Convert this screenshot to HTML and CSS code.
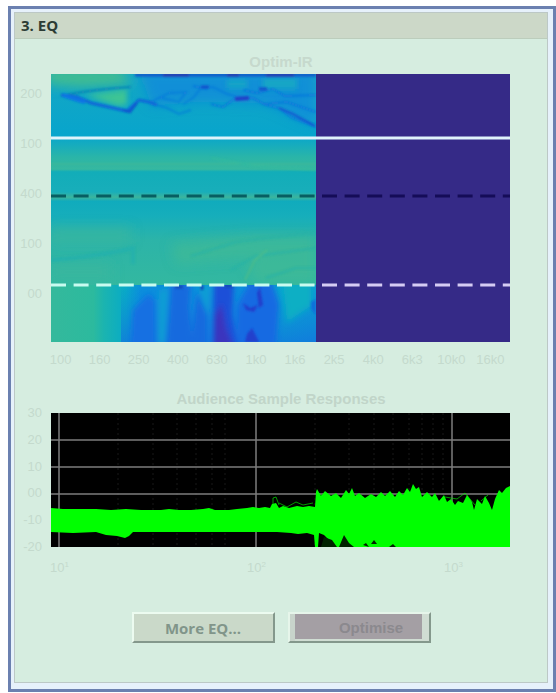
FILE: index.html
```html
<!DOCTYPE html>
<html lang="en">
<head>
    <meta charset="UTF-8">
    <meta name="viewport" content="width=device-width, initial-scale=1.0">
    <title>EQ</title>
    <link rel="stylesheet" href="styles.css">
</head>
<body>
    <div class="frame">
        <section class="panel">
            <h1 class="panel-header">3. EQ</h1>

            <h2 class="plot-title optim-title">Optim-IR</h2>
            <div class="plot">
                <div class="y-axis y-axis-map">
                    <span>200</span><span>100</span><span>400</span><span>100</span><span>00</span>
                </div>
                <svg class="chart" viewBox="0 0 459 268">
                    <defs>
                        <linearGradient id="base" x1="0" y1="0" x2="0" y2="1">
                            <stop offset="0" stop-color="#14a6c4"/>
                            <stop offset="0.23" stop-color="#08a5cc"/>
                            <stop offset="0.26" stop-color="#14abc0"/>
                            <stop offset="0.31" stop-color="#2ab5a8"/>
                            <stop offset="0.355" stop-color="#36b8a0"/>
                            <stop offset="0.365" stop-color="#12adb9"/>
                            <stop offset="0.44" stop-color="#18aeba"/>
                            <stop offset="0.46" stop-color="#3cb49c"/>
                            <stop offset="0.475" stop-color="#10abbd"/>
                            <stop offset="0.53" stop-color="#16aebb"/>
                            <stop offset="0.62" stop-color="#2cb4a8"/>
                            <stop offset="0.79" stop-color="#33b8a0"/>
                        </linearGradient>
                        <linearGradient id="low" x1="0" y1="0" x2="1" y2="0">
                            <stop offset="0" stop-color="#34b99c"/>
                            <stop offset="0.16" stop-color="#2cba9e"/>
                            <stop offset="0.2" stop-color="#1bb4b0"/>
                            <stop offset="0.28" stop-color="#08abc6"/>
                            <stop offset="0.34" stop-color="#0b8fdc"/>
                            <stop offset="0.8" stop-color="#0b8ddc"/>
                            <stop offset="0.88" stop-color="#08a8cc"/>
                            <stop offset="1" stop-color="#0c9cd2"/>
                        </linearGradient>
                        <linearGradient id="deep" x1="0" y1="0" x2="0" y2="1">
                            <stop offset="0" stop-color="#0d78e0" stop-opacity="0"/>
                            <stop offset="1" stop-color="#1468e4" stop-opacity="0.6"/>
                        </linearGradient>
                        <filter id="soft" x="-10%" y="-50%" width="120%" height="200%"><feGaussianBlur stdDeviation="1.2"/></filter>
                        <filter id="streak"><feGaussianBlur stdDeviation="2.4 3"/></filter>
                        <filter id="wide" x="-20%" y="-50%" width="140%" height="200%"><feGaussianBlur stdDeviation="6"/></filter>
                        <clipPath id="left"><rect width="265" height="268"/></clipPath>
                        <clipPath id="bottom"><rect y="211" width="265" height="57"/></clipPath>
                    </defs>
                    <rect width="459" height="268" fill="#352a87"/>
                    <g clip-path="url(#left)">
                        <rect width="265" height="268" fill="url(#base)"/>
                        <!-- top band -->
                        <g filter="url(#wide)">
                            <path d="M-5 -5H70L80 10L30 13L-5 10Z" fill="#42bd90"/>
                            <path d="M88 -4H265V52L215 30L150 28L100 32Z" fill="#0c86de" opacity="0.7"/>
                            <path d="M0 154h80v14H0zM0 190h60v16H0z" fill="#3cb69c" opacity="0.7"/>
                            <path d="M120 170l80-8h65v18l-140 10zM195 190l30-12h40v30h-60z" fill="#43bb92" opacity="0.6"/>
                        </g>
                        <g filter="url(#streak)">
                            <path d="M34 21L76 15L76 31L66 32Z" fill="#3cc494"/>
                            <path d="M176 6h20v8h-20zM212 4h34v11h-34z" fill="#12a8c4"/>
                        </g>
                        <g filter="url(#soft)" fill="none" stroke="#0b74dc" stroke-width="2">
                            <path d="M84 1H265" stroke="#1656c8" stroke-width="3"/>
                            <path d="M112 1h26M176 1h12M215 1h28" stroke="#2c38ae" stroke-width="3"/>
                            <path d="M14 21Q45 15 80 13" stroke="#0884b8"/>
                            <path d="M10 21L26 23L40 29L76 37L88 26L98 28L106 31" stroke="#0b66d8" stroke-width="3"/>
                            <path d="M12 21L24 25L34 28" stroke="#0974e4" stroke-width="4"/>
                            <path d="M72 36L79 38L86 29" stroke="#0a50cc" stroke-width="2"/>
                            <path d="M100 28L118 19L135 18L128 28L110 24M106 31L116 34L128 40L140 36M132 30L142 24L150 14L162 13L176 20L190 24" opacity="0.6"/>
                            <path d="M160 30L172 33L186 23L202 24L215 31L228 34L240 43L265 53" opacity="0.8"/>
                            <path d="M192 16L206 19L222 15L234 22L265 21M212 30L236 28L265 38M142 12L156 15" opacity="0.8"/>
                            <path d="M184 25L198 24" stroke="#2440c8" stroke-width="4"/>
                            <path d="M228 34L242 40L264 52" stroke="#1556d2" stroke-width="2"/>
                            <path d="M208 15h8M150 13h8" stroke="#1450cc" stroke-width="3"/>
                        </g>
                        <!-- faint streaks in the middle band -->
                        <g filter="url(#soft)" fill="none" stroke-width="2" opacity="0.7">
                            <path d="M0 186Q50 182 82 174V190" stroke="#22b0ae" stroke-width="4"/>
                            <path d="M140 182L185 168L265 158M180 196L205 182L265 174M215 204l30-10h20" stroke="#26b2a8"/>
                            <path d="M0 90H265" stroke="#40b996"/>
                            <path d="M160 84l45 8l60 4" stroke="#36bb9e"/>
                            <path d="M194 206l10-20l12-10" stroke="#50bd88"/>
                        </g>
                        <!-- bottom band -->
                        <rect y="211" width="265" height="57" fill="url(#low)"/>
                        <rect x="70" y="211" width="195" height="57" fill="url(#deep)"/>
                        <g clip-path="url(#bottom)">
                            <g filter="url(#streak)">
                                <path d="M82 236L90 228L97 220L104 226V275H80Z" fill="#126fe2"/>
                                <path d="M120 208h20l-2 25l4 42h-26l2-30zM146 218l10 22v35h-16z" fill="#176ade"/>
                                <path d="M163 206h20l-2 34l6 35h-25z" fill="#1a4fd8"/>
                                <path d="M164 240l7-10l4 24l8 21h-20z" fill="#3b35be"/>
                                <path d="M186 232l14-26h20l8 24l-4 45h-38z" fill="#166be2"/>
                                <path d="M108 216l9-2l-3 56h-7zM145 206h15l-3 36z" fill="#0a9dd4"/>
                                <path d="M232 206h28v26l-24 16z" fill="#0aafc4"/>
                            </g>
                            <g filter="url(#soft)">
                                <path d="M192 229l7 5l8-3l-4 7l-8-2zM206 219l3-6l3 18l-4 3zM196 260l5-6l7 14h-14z" fill="#243fcc"/>
                                <path d="M260 228l5-3v16l-5-6z" fill="#1171da"/>
                                <path d="M124 213h8M151 211v5M174 212h8" stroke="#194ab8" stroke-width="3"/>
                            </g>
                        </g>
                    </g>
                    <g fill="none" stroke-width="3">
                        <path d="M0 64H459" stroke="#dff3fb"/>
                        <path d="M0 122H265" stroke="#075e62" stroke-dasharray="15 7.6"/>
                        <path d="M271 122H459" stroke="#150c58" stroke-dasharray="15 7.6"/>
                        <path d="M0 211H265" stroke="#c8fbf0" stroke-dasharray="15 7.6"/>
                        <path d="M271 211H459" stroke="#d5ccf4" stroke-dasharray="15 7.6"/>
                    </g>
                </svg>
            </div>
            <div class="x-axis x-axis-map">
                <span>100</span><span>160</span><span>250</span><span>400</span><span>630</span><span>1k0</span>
                <span>1k6</span><span>2k5</span><span>4k0</span><span>6k3</span><span>10k0</span><span>16k0</span>
            </div>

            <h2 class="plot-title response-title">Audience Sample Responses</h2>
            <div class="plot">
                <div class="y-axis y-axis-response">
                    <span>30</span><span>20</span><span>10</span><span>00</span><span>-10</span><span>-20</span>
                </div>
                <svg class="chart" viewBox="0 0 459 134">
                    <rect width="459" height="134" fill="#000"/>
                    <path d="M67 0V134M102 0V134M126 0V134M145 0V134M161 0V134M174 0V134M264 0V134M298 0V134M323 0V134M342 0V134M358 0V134M371 0V134M382 0V134M392 0V134" stroke="#181818" stroke-dasharray="2 3" fill="none"/>
                    <path d="M0 27H459M0 54H459M0 81H459M8 0V134M205 0V134M401 0V134" stroke="#7c7c7c" stroke-width="1.5" fill="none"/>
                    <path d="M0 95L12 96L30 96L45 96L60 97L75 96L90 97L110 97L118 96L128 97L140 97L152 96L158 95L164 97L178 97L186 96L196 95L202 94L208 95L214 94L219 95L221 91L225 90L228 95L232 93L238 95L246 93L252 94L258 93L264 94L265 79L266 76L270 83L274 78L280 83L285 80L290 85L295 77L298 81L301 75L304 83L308 80L314 85L320 81L325 84L330 79L334 83L339 78L344 84L348 78L352 82L356 75L359 79L362 71L365 76L368 74L371 84L376 79L381 84L384 80L388 88L393 82L396 89L400 86L404 92L407 88L412 90L416 82L421 89L423 97L426 86L431 91L434 83L438 90L441 97L444 86L448 77L451 80L455 75L459 73V134H280L277 126L273 122L268 120L267 134H264L263 122L256 120L247 121L240 120L226 119L195 119L160 119L125 119L82 119L78 123L74 125L66 123L55 122L45 119L22 120L0 119Z" fill="#0f0"/>
                    <path d="M270 134L273 124L281 127L286 134ZM288 134L293 122L298 130L303 134ZM312 132l3-2l3 4zM320 131l3-4l3 4zM338 134l4-3l3 3z" fill="#020"/>
                    <path d="M222 92L222 85L225 84L228 92M228 90L236 94L245 89L252 92L262 90M268 80L276 88L285 82M376 82L386 90L394 84L406 86L414 80L424 92M430 88L437 82" stroke="#0f0" fill="none" opacity="0.6"/>
                </svg>
            </div>
            <div class="x-axis x-axis-response">
                <span>10<sup>1</sup></span><span>10<sup>2</sup></span><span>10<sup>3</sup></span>
            </div>

            <div class="buttons">
                <button type="button" class="button">More EQ...</button>
                <button type="button" class="button button-optimise">Optimise</button>
            </div>
        </section>
    </div>
</body>
</html>
```

FILE: styles.css
```css
* {
    box-sizing: border-box;
}
body {
    margin: 0;
    padding: 6px 0 0 8px;
    background-color: #ffffff;
    font-family: "Liberation Sans", Arial, sans-serif;
}
.frame {
    padding: 3px 5px 6px 3px;
    border: 3px solid #6b80b0;
    background-color: #e6f1fb;
}
.panel {
    padding-bottom: 39px;
    border: 1px solid #bcc8c6;
    background-color: #d6ede0;
}
.panel-header {
    margin: 0;
    padding-left: 6px;
    border-bottom: 1px solid #bccdbc;
    background-color: #ccd8c8;
    color: #2c3c34;
    font-family: "Open Sans", sans-serif;
    font-size: 15px;
    line-height: 25px;
}
.plot-title {
    margin: 0;
    color: #c1d5c9;
    font-size: 15px;
    line-height: 18px;
    text-align: center;
}
.optim-title {
    padding: 14px 0 3px;
    color: #c6d9cd;
}
.response-title {
    padding: 22px 0 5px;
}
.plot {
    display: grid;
    grid-template-columns: 36px 1fr;
    padding-right: 37px;
}
.chart {
    display: block;
    width: 100%;
}
.y-axis,
.x-axis {
    color: #c4dacd;
    font-size: 13px;
    line-height: 16px;
}
.y-axis {
    display: flex;
    flex-direction: column;
    justify-content: space-between;
    padding-right: 9px;
    text-align: right;
}
.y-axis-map {
    padding-top: 12px;
    padding-bottom: 40px;
}
.y-axis-response {
    margin: -8px 0;
}
.x-axis-map {
    display: grid;
    grid-template-columns: repeat(12, 1fr);
    padding: 10px 37px 0 26px;
    text-align: center;
}
.x-axis-response {
    display: flex;
    justify-content: space-between;
    padding: 13px 84px 0 35px;
}
.x-axis sup {
    font-size: 8px;
    line-height: 8px;
}
.buttons {
    display: flex;
    justify-content: center;
    gap: 13px;
    margin-top: 36px;
}
.button {
    width: 143px;
    height: 31px;
    padding: 0;
    border: 2px solid;
    border-color: #ecfbf0 #84988c #84988c #ecfbf0;
    background-color: #cad9c9;
    color: #81958a;
    font-family: "Open Sans", sans-serif;
    font-size: 15px;
    font-weight: bold;
    cursor: pointer;
}
.button-optimise {
    padding-left: 24px;
    border-color: #e6f5ea #84988c #84988c #e6f5ea;
    background-color: #a49fa4;
    box-shadow: inset 5px 0 #c8d4cb, inset -7px 0 #d0ddd3, inset 0 -2px #d0ddd3;
    color: #8b898e;
    font-family: "Liberation Sans", Arial, sans-serif;
}
```
